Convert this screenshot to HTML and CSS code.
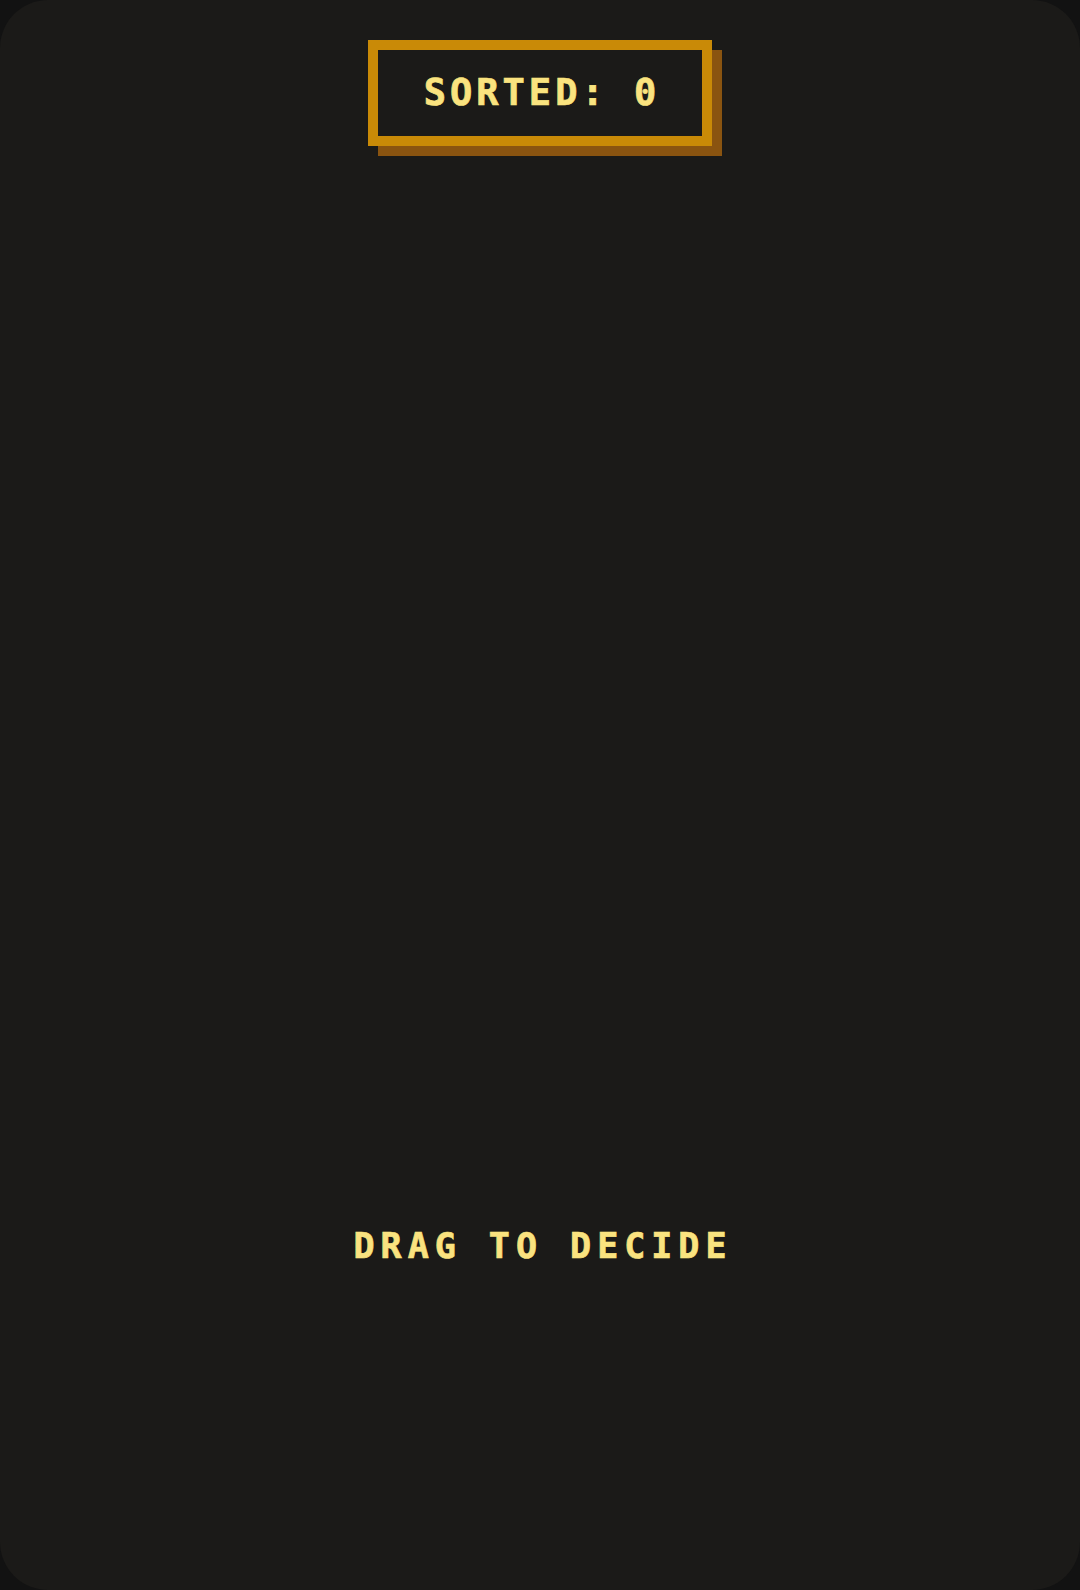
FILE: index.html
```html
<!DOCTYPE html>
<html lang="en">
<head>
<meta charset="utf-8">
<title>Sorter</title>
<link rel="stylesheet" href="styles.css">
</head>
<body>
<main class="screen">
  <header class="top">
    <div class="counter">SORTED: 0</div>
  </header>
  <section class="stack"></section>
  <footer class="hint">DRAG TO DECIDE</footer>
</main>
</body>
</html>
```

FILE: styles.css
```css
html, body {
  margin: 0;
  padding: 0;
  background: #121212;
}
body {
  width: 1080px;
  height: 1590px;
  overflow: hidden;
}
.screen {
  box-sizing: border-box;
  width: 1080px;
  height: 1590px;
  background: #1b1a18;
  border-radius: 48px;
  display: flex;
  flex-direction: column;
  align-items: center;
  padding-top: 40px;
  font-family: "DejaVu Sans Mono", "Liberation Mono", monospace;
  font-weight: bold;
  color: #fae37f;
  -webkit-text-stroke: 0.7px #fae37f;
}
.top {
  display: flex;
  justify-content: center;
}
.counter {
  box-sizing: border-box;
  width: 344px;
  height: 106px;
  border: 10px solid #c98a07;
  background: #1b1a18;
  box-shadow: 10px 10px 0 #8a5410;
  font-size: 37px;
  line-height: 86px;
  letter-spacing: 4px;
  text-indent: 4px;
  text-align: center;
}
.stack {
  flex: 1;
  width: 100%;
}
.hint {
  font-size: 35px;
  line-height: 34px;
  letter-spacing: 6px;
  text-indent: 6px;
  padding-bottom: 327px;
}
```
